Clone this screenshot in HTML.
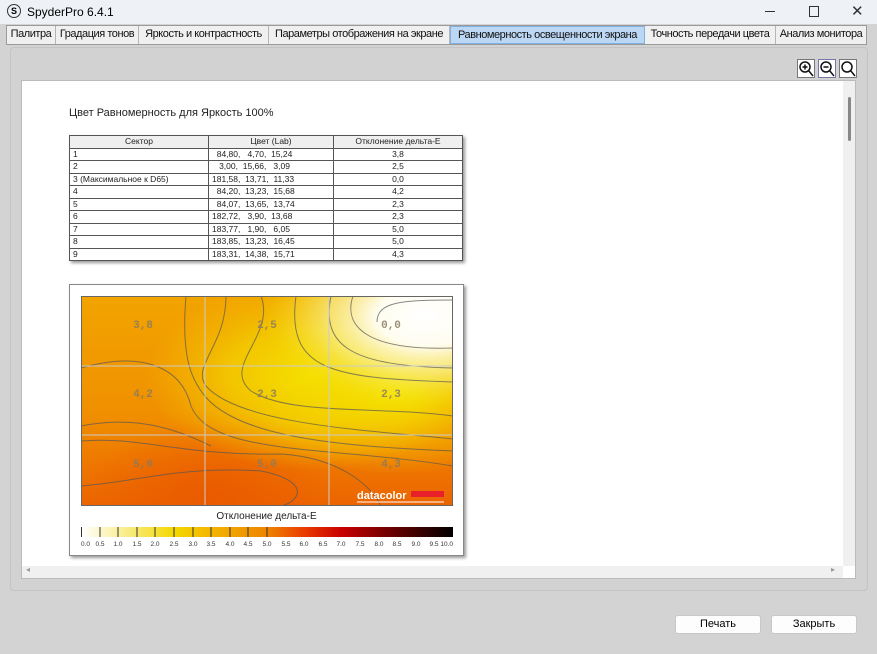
<!DOCTYPE html>
<html><head><meta charset="utf-8"><style>
*{margin:0;padding:0;box-sizing:border-box}
body{width:877px;height:654px;background:#d3d3d3;font-family:"Liberation Sans",sans-serif;position:relative;overflow:hidden}
.abs{position:absolute}
.title{left:0;top:0;width:877px;height:24px;background:#eef1f6;font-size:12px}
.tabs{left:6px;top:25px;height:20px;width:861px;display:flex;border:1px solid #9a9a9a;background:#f0f0f0;overflow:hidden}
.tab{font-size:11px;padding-top:2px;height:18px;border-right:1px solid #b5b5b5;white-space:nowrap;color:#111;letter-spacing:-0.45px;text-align:center;overflow:hidden;flex:none}
.tab.sel{background:#bcd7f3;border:1px solid #7fb0e0}
table{border-collapse:collapse;font-size:8.5px;color:#222}
td{border:1px solid #555;height:12.5px;padding:0 3px;line-height:11px}
.btn{background:#fdfdfd;border:1px solid #c8c8c8;border-radius:3px;font-size:11px;text-align:center;line-height:17px;height:19px;width:86px}
</style></head><body>
<div class="abs title">
 <div class="abs" style="left:7px;top:4px;width:14px;height:14px;border:1px solid #333;border-radius:50%;font-size:9px;font-weight:bold;text-align:center;line-height:12px">S</div>
 <div class="abs" style="left:27px;top:5px">SpyderPro 6.4.1</div>
 <div class="abs" style="left:765px;top:11px;width:10px;height:1px;background:#333"></div>
 <div class="abs" style="left:809px;top:6px;width:10px;height:11px;border:1px solid #333"></div>
 <div class="abs" style="left:851px;top:2px;font-size:15px;color:#333">✕</div>
</div>
<div class="abs tabs">
<div class="tab" style="width:49px">Палитра</div><div class="tab" style="width:83px">Градация тонов</div><div class="tab" style="width:130px">Яркость и контрастность</div><div class="tab" style="width:181px">Параметры отображения на экране</div><div class="tab sel" style="width:195px">Равномерность освещенности экрана</div><div class="tab" style="width:131px">Точность передачи цвета</div><div class="tab" style="width:90px;border-right:0">Анализ монитора</div>
</div>
<div class="abs" style="left:10px;top:47px;width:858px;height:544px;border:1px solid #c4c4c4;border-radius:4px;background:#d2d2d2"></div>
<svg class="abs" style="left:797px;top:59px" width="62" height="20">
 <g fill="none" stroke="#111" stroke-width="1.5">
 <rect x="0.5" y="0.5" width="17" height="18" fill="#fff" stroke="#777" stroke-width="1"/>
 <circle cx="8" cy="8" r="5"/><line x1="11.5" y1="11.5" x2="16" y2="17"/><line x1="5.5" y1="8" x2="10.5" y2="8"/><line x1="8" y1="5.5" x2="8" y2="10.5"/>
 <rect x="21.5" y="0.5" width="17" height="18" fill="#fff" stroke="#77a" stroke-width="1"/>
 <circle cx="29" cy="8" r="5"/><line x1="32.5" y1="11.5" x2="37" y2="17"/><line x1="26.5" y1="8" x2="31.5" y2="8"/>
 <rect x="42.5" y="0.5" width="17" height="18" fill="#fff" stroke="#777" stroke-width="1"/>
 <circle cx="50" cy="8" r="5"/><line x1="53.5" y1="11.5" x2="58" y2="17"/>
 </g></svg>
<div class="abs" style="left:21px;top:80px;width:835px;height:499px;background:#fff;border:1px solid #bbb"></div>
<div class="abs" style="left:843px;top:81px;width:12px;height:485px;background:#f0f0f0"></div>
<div class="abs" style="left:848px;top:97px;width:3px;height:44px;background:#888;border-radius:2px"></div>
<div class="abs" style="left:22px;top:566px;width:821px;height:12px;background:#f0f0f0"></div>
<div class="abs" style="left:26px;top:565px;font-size:8px;color:#999">◂</div>
<div class="abs" style="left:831px;top:565px;font-size:8px;color:#999">▸</div>

<div class="abs" style="left:69px;top:107px;font-size:11px;color:#222">Цвет Равномерность для Яркость 100%</div>
<table class="abs" style="left:69px;top:135px;width:394px;box-shadow:2px 2px 3px #999">
<tr style="background:#efefef"><td style="width:139px;text-align:center">Сектор</td><td style="width:125px;text-align:center">Цвет (Lab)</td><td style="text-align:center">Отклонение дельта-E</td></tr>
<tr><td>1</td><td>&nbsp;&nbsp;84,80,&nbsp;&nbsp; 4,70,&nbsp; 15,24</td><td style="text-align:center">3,8</td></tr>
<tr><td>2</td><td>&nbsp;&nbsp;&nbsp;3,00,&nbsp; 15,66,&nbsp;&nbsp; 3,09</td><td style="text-align:center">2,5</td></tr>
<tr><td>3 (Максимальное к D65)</td><td>181,58,&nbsp; 13,71,&nbsp; 11,33</td><td style="text-align:center">0,0</td></tr>
<tr><td>4</td><td>&nbsp;&nbsp;84,20,&nbsp; 13,23,&nbsp; 15,68</td><td style="text-align:center">4,2</td></tr>
<tr><td>5</td><td>&nbsp;&nbsp;84,07,&nbsp; 13,65,&nbsp; 13,74</td><td style="text-align:center">2,3</td></tr>
<tr><td>6</td><td>182,72,&nbsp;&nbsp; 3,90,&nbsp; 13,68</td><td style="text-align:center">2,3</td></tr>
<tr><td>7</td><td>183,77,&nbsp;&nbsp; 1,90,&nbsp;&nbsp; 6,05</td><td style="text-align:center">5,0</td></tr>
<tr><td>8</td><td>183,85,&nbsp; 13,23,&nbsp; 16,45</td><td style="text-align:center">5,0</td></tr>
<tr><td>9</td><td>183,31,&nbsp; 14,38,&nbsp; 15,71</td><td style="text-align:center">4,3</td></tr>
</table>

<div class="abs" style="left:69px;top:284px;width:395px;height:272px;border:1px solid #888;background:#fff;box-shadow:2px 2px 3px #999"></div>
<svg class="abs" style="left:81px;top:296px" width="372" height="210">
<defs>
<linearGradient id="base" x1="0" y1="0" x2="0" y2="1"><stop offset="0" stop-color="#f2a400"/><stop offset="0.55" stop-color="#f09000"/><stop offset="1" stop-color="#ec6400"/></linearGradient>
<radialGradient id="yel" cx="0.62" cy="0.38" r="0.45"><stop offset="0" stop-color="#f5e000"/><stop offset="0.5" stop-color="#f3d000" stop-opacity="0.8"/><stop offset="1" stop-color="#f3c000" stop-opacity="0"/></radialGradient>
<radialGradient id="yel2" cx="0.85" cy="0.45" r="0.4"><stop offset="0" stop-color="#f5e400"/><stop offset="1" stop-color="#f5d800" stop-opacity="0"/></radialGradient>
<radialGradient id="wh" cx="0.93" cy="0.1" r="0.45"><stop offset="0" stop-color="#fff"/><stop offset="0.3" stop-color="#fffdf0"/><stop offset="0.6" stop-color="#f9f090" stop-opacity="0.7"/><stop offset="1" stop-color="#f5e000" stop-opacity="0"/></radialGradient>
<radialGradient id="red" cx="0.35" cy="0.95" r="0.35"><stop offset="0" stop-color="#ea5a00"/><stop offset="1" stop-color="#ea5a00" stop-opacity="0"/></radialGradient>
</defs>
<rect width="372" height="210" fill="url(#base)"/>
<rect width="372" height="210" fill="url(#red)"/>
<rect width="372" height="210" fill="url(#yel)"/>
<rect width="372" height="210" fill="url(#yel2)"/>
<rect width="372" height="210" fill="url(#wh)"/>
<g fill="none" stroke="#555" stroke-opacity="0.7" stroke-width="1">
<path d="M296,26 C296,6 320,4 372,4"/>
<path d="M272,0 C262,30 285,55 372,52"/>
<path d="M250,0 C240,50 270,70 372,72"/>
<path d="M215,0 C205,75 250,82 372,86"/>
<path d="M180,0 C195,40 140,70 170,95 C210,120 300,110 372,120"/>
<path d="M145,0 C145,50 110,70 125,90 C160,130 300,135 372,143"/>
<path d="M105,0 C100,60 110,80 120,95 C150,140 250,150 372,155"/>
<path d="M0,72 C60,55 100,70 110,110 C130,160 250,150 372,170"/>
<path d="M0,145 C60,140 100,160 200,158 C260,162 290,190 300,210"/>
<path d="M0,190 C60,185 100,170 180,175 C230,185 220,205 200,210"/>
<path d="M0,130 C50,120 90,130 130,150"/>
</g>
<g stroke="#ccc" stroke-width="1"><line x1="124" y1="0" x2="124" y2="210"/><line x1="248" y1="0" x2="248" y2="210"/><line x1="0" y1="70" x2="372" y2="70"/><line x1="0" y1="139" x2="372" y2="139"/></g>
<g font-family="Liberation Mono" font-size="11" font-weight="bold" fill="#8a7a60" fill-opacity="0.85" text-anchor="middle">
<text x="62" y="32">3,8</text><text x="186" y="32">2,5</text><text x="310" y="32">0,0</text>
<text x="62" y="101">4,2</text><text x="186" y="101">2,3</text><text x="310" y="101">2,3</text>
<text x="62" y="171">5,0</text><text x="186" y="171">5,0</text><text x="310" y="171">4,3</text></g>
<text x="276" y="203" font-size="11" font-weight="bold" fill="#fff">datacolor</text>
<rect x="330" y="195" width="33" height="6" fill="#e8202a"/>
<line x1="276" y1="206" x2="363" y2="206" stroke="#fff"/>
</svg>
<div class="abs" style="left:81px;top:296px;width:372px;height:210px;border:1px solid #666"></div>
<div class="abs" style="left:0;top:511px;width:533px;text-align:center;font-size:10px;color:#222">Отклонение дельта-E</div>
<svg class="abs" style="left:81px;top:527px" width="373" height="22">
<defs><linearGradient id="lg" x1="0" x2="1"><stop offset="0" stop-color="#fff"/><stop offset="0.1" stop-color="#faf0a0"/><stop offset="0.25" stop-color="#f4d800"/><stop offset="0.35" stop-color="#f3b500"/><stop offset="0.5" stop-color="#ef8400"/><stop offset="0.6" stop-color="#ea3c00"/><stop offset="0.7" stop-color="#c80000"/><stop offset="0.85" stop-color="#600000"/><stop offset="1" stop-color="#000"/></linearGradient></defs>
<rect x="0" y="0" width="372" height="10" fill="url(#lg)"/>
<g stroke="#333">
<line x1="0.5" y1="0" x2="0.5" y2="10"/><line x1="19" y1="0" x2="19" y2="10"/><line x1="37" y1="0" x2="37" y2="10"/><line x1="56" y1="0" x2="56" y2="10"/><line x1="74" y1="0" x2="74" y2="10"/><line x1="93" y1="0" x2="93" y2="10"/><line x1="112" y1="0" x2="112" y2="10"/><line x1="130" y1="0" x2="130" y2="10"/><line x1="149" y1="0" x2="149" y2="10"/><line x1="167" y1="0" x2="167" y2="10"/><line x1="186" y1="0" x2="186" y2="10"/></g>
<g font-size="6.5" fill="#333" text-anchor="middle">
<text x="0" y="19" text-anchor="start">0.0</text><text x="19" y="19">0.5</text><text x="37" y="19">1.0</text><text x="56" y="19">1.5</text><text x="74" y="19">2.0</text><text x="93" y="19">2.5</text><text x="112" y="19">3.0</text><text x="130" y="19">3.5</text><text x="149" y="19">4.0</text><text x="167" y="19">4.5</text><text x="186" y="19">5.0</text><text x="205" y="19">5.5</text><text x="223" y="19">6.0</text><text x="242" y="19">6.5</text><text x="260" y="19">7.0</text><text x="279" y="19">7.5</text><text x="298" y="19">8.0</text><text x="316" y="19">8.5</text><text x="335" y="19">9.0</text><text x="353" y="19">9.5</text><text x="372" y="19" text-anchor="end">10.0</text></g>
</svg>
<div class="abs btn" style="left:675px;top:615px">Печать</div>
<div class="abs btn" style="left:771px;top:615px">Закрыть</div>
</body></html>
